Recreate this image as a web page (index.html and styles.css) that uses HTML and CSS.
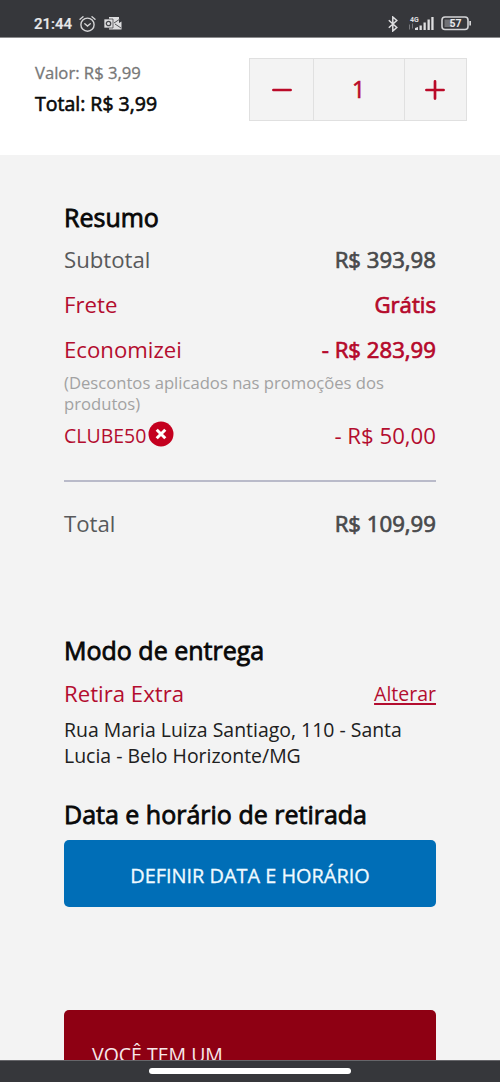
FILE: index.html
```html
<!DOCTYPE html>
<html lang="pt-BR">
<head>
<meta charset="utf-8">
<title>Carrinho</title>
<link rel="stylesheet" href="styles.css">
</head>
<body>
<div class="screen">
  <header class="status">
    <div class="status-left">
      <span class="clock">21:44</span>
      <svg class="alarm" width="17" height="18" viewBox="0 0 17 18" fill="none" stroke="#d4d4d6" stroke-width="1.4" stroke-linecap="round"><circle cx="8.5" cy="9.7" r="6.6"/><path d="M5.8 8.7l2.7 2.3 2.8-2.3M1 4.2L4 1.700M16 4.200l-3-2.500"/></svg>
      <svg class="outlook" width="18" height="15" viewBox="0 0 18 15"><path d="M5 1h10v6l2.500-1.500v8H5z" fill="#dedee0"/><path d="M10 7l6-4M11 8l6 4" stroke="#55565a" stroke-width="1"/><path d="M0 3h9v9H0z" fill="#dedee0" stroke="#36373b" stroke-width=".7"/><circle cx="4.500" cy="7.500" r="2.200" fill="none" stroke="#45464a" stroke-width="1.300"/></svg>
    </div>
    <div class="status-right">
      <svg class="bluetooth" width="10" height="16" viewBox="0 0 10 16" fill="none" stroke="#dedee0" stroke-width="1.500"><path d="M.8 4.200l8 7.300L4.800 15V1l4 3.500-8 7.300"/></svg>
      <svg class="signal" width="28" height="17" viewBox="0 0 28 17"><text x="2" y="6.500" class="net">4G</text><path d="M1.500 9.500v5M4.500 8.500v5" stroke="#77787c" stroke-width="1"/><path d="M7 13l3-1v3H7zM11.500 10.500h2.300V15h-2.300zM15.500 7.500h2.300V15h-2.300zM19.500 4.500h2.300V15h-2.300zM23.300 2h2.300v13h-2.300z" fill="#dedee0"/></svg>
      <svg class="battery" width="31" height="15" viewBox="0 0 31 15"><rect x="1" y="1" width="26" height="12.500" rx="3" fill="none" stroke="#d4d4d6" stroke-width="1.600"/><path d="M3.500 3.500h8v7.500h-8z" fill="#707175"/><path d="M28.300 5h1.700v4.500h-1.700z" fill="#d4d4d6"/><text x="14.500" y="11.200" class="charge">57</text></svg>
    </div>
  </header>

  <section class="item">
    <div class="prices">
      <div class="unit">Valor: R$ 3,99</div>
      <div class="sum">Total: R$ 3,99</div>
    </div>
    <div class="stepper">
      <button class="minus"><svg width="20" height="20" viewBox="0 0 20 20"><path d="M1.400 10h17.200"/></svg></button>
      <span class="count">1</span>
      <button class="plus"><svg width="20" height="20" viewBox="0 0 20 20"><path d="M1.400 10h17.200M10 1.400v17.200"/></svg></button>
    </div>
  </section>

  <main class="content">
    <h2 class="title">Resumo</h2>
    <div class="row subtotal"><span>Subtotal</span><span class="strong">R$ 393,98</span></div>
    <div class="row red freight"><span>Frete</span><span class="strong">Grátis</span></div>
    <div class="row red saved"><span>Economizei</span><span class="strong">- R$ 283,99</span></div>
    <p class="hint">(Descontos aplicados nas promoções dos produtos)</p>
    <div class="row red coupon">
      <span class="code">CLUBE50<svg width="26" height="26" viewBox="0 0 26 26"><circle cx="13" cy="13" r="12.500" fill="#c4001f"/><path d="M8.700 8.700l8.600 8.600M17.300 8.700l-8.600 8.600" stroke="#fff" stroke-width="3"/></svg></span>
      <span>- R$ 50,00</span>
    </div>
    <hr class="rule">
    <div class="row total"><span>Total</span><span class="strong">R$ 109,99</span></div>

    <h2 class="title delivery">Modo de entrega</h2>
    <div class="row red method"><span>Retira Extra</span><a class="change">Alterar</a></div>
    <p class="address">Rua Maria Luiza Santiago, 110 - Santa Lucia - Belo Horizonte/MG</p>
    <h2 class="title pickup">Data e horário de retirada</h2>
    <button class="define">DEFINIR DATA E HORÁRIO</button>
    <div class="promo">VOCÊ TEM UM</div>
  </main>

  <footer class="nav"><div class="pill"></div></footer>
</div>
</body>
</html>
```

FILE: styles.css
```css
* { box-sizing: border-box; }
body { margin: 0; font-family: "Open Sans", "Noto Sans", sans-serif; }
h2, p { margin: 0; font-weight: 400; }
button { border: 0; padding: 0; font-family: inherit; }
svg { display: block; flex: none; }

.screen { width: 500px; height: 1082px; display: flex; flex-direction: column; overflow: hidden; background: #f3f3f3; }

.status { flex: none; height: 38px; padding: 9px 28px 0 34px; display: flex; justify-content: space-between; background: #36373b; border-bottom: 1px solid #8b8b8d; }
.status-left, .status-right { display: flex; height: 29px; align-items: center; }
.clock { font: 500 15px/30px Roboto, sans-serif; color: #e8e8ea; -webkit-text-stroke: .2px #e8e8ea; }
.alarm { margin-left: 7px; }
.outlook { margin-left: 8px; }
.signal { margin-left: 10px; }
.battery { margin-left: 5px; }
.net { font: 700 7px Roboto, sans-serif; fill: #dedee0; }
.charge { font: 700 10.500px Roboto, sans-serif; fill: #e8e8ea; text-anchor: middle; }

.item { flex: none; height: 117px; padding: 20px 33px 0 35px; display: flex; justify-content: space-between; background: #fff; }
.unit { height: 31px; font-size: 16.65px; line-height: 30px; color: #777; -webkit-text-stroke: .3px #777; }
.sum { height: 30px; font-size: 19.5px; line-height: 30px; color: #0a0a0a; -webkit-text-stroke: .6px #0a0a0a; }
.stepper { width: 218px; height: 63px; display: grid; grid-template-columns: 63px 92px 1fr; border: 1px solid #e0e0e0; background: #f3f3f3; }
.stepper button { display: grid; place-items: center; background: none; }
.plus { padding-right: 2px; }
.stepper path { stroke: #ba0a28; stroke-width: 2.7; stroke-linecap: round; }
.count { display: grid; place-items: center; padding: 0 1px 2px 0; border: solid #e0e0e0; border-width: 0 1px; color: #ba0a28; font-size: 23px; line-height: 30px; -webkit-text-stroke: .6px #ba0a28; }

.content { flex: 1; min-height: 0; overflow: hidden; padding: 44px 64px 0; display: flex; flex-direction: column; }
.content > * { flex: none; }
.title { height: 36px; font-size: 25px; line-height: 36px; color: #080808; -webkit-text-stroke: .8px #080808; white-space: nowrap; }
.row { height: 44px; display: flex; justify-content: space-between; font-size: 22.2px; line-height: 44px; color: #58595b; }
.strong { color: #48494b; -webkit-text-stroke: .7px currentColor; }
.red, .red .strong { color: #b30d2f; }
.red .strong { color: #b5082a; }
.subtotal { height: 45px; margin-top: 3px; }
.freight { height: 45px; }
.hint { height: 42px; font-size: 16.65px; line-height: 21px; color: #a2a2a2; }
.coupon { height: 44px; }
.code { display: flex; align-items: center; font-size: 19.500px; }
.code svg { margin: -4px 0 0 2px; }
.rule { width: 100%; height: 2px; margin: 22px 0 0; border: 0; background: #b9bac9; }
.total { margin-top: 20px; }
.delivery { margin-top: 86px; }
.method { margin-top: 4px; }
.change { font-size: 19.500px; text-decoration: underline; text-underline-offset: 2px; text-decoration-thickness: 1.5px; }
.address { height: 52px; margin-top: 1px; font-size: 19.450px; line-height: 26px; color: #202020; }
.pickup { margin-top: 27px; }
.define { width: 100%; height: 67px; margin-top: 8px; border-radius: 5px; background: #006eb7; color: #effaff; font-size: 19.9px; line-height: 71px; -webkit-text-stroke: .3px #effaff; }
.promo { height: 90px; margin-top: 103px; padding: 29px 28px 0; border-radius: 5px 5px 0 0; background: #8e0013; color: #f7e8ea; font-size: 19.500px; line-height: 32px; }

.nav { flex: none; height: 22px; padding-top: 7px; background: #36373b; border-top: 1px solid #66666a; }
.pill { width: 202px; height: 6px; margin: 0 auto; border-radius: 3px; background: #fff; }
```
